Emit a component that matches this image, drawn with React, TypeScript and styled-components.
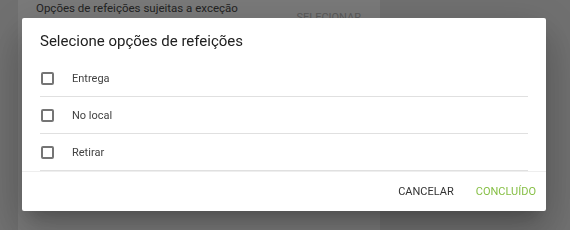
import React, { useState } from "react";
import styled, { createGlobalStyle } from "styled-components";

const GlobalStyle = createGlobalStyle`
  html, body {
    margin: 0;
    padding: 0;
    background: #ebebeb;
    font-family: Roboto, "Liberation Sans", Arial, sans-serif;
    overflow: hidden;
  }
  * {
    box-sizing: border-box;
  }
`;

const Page = styled.div`
  width: 570px;
  height: 230px;
  padding-left: 18px;
`;

const SettingsCard = styled.div`
  width: 362px;
  height: 230px;
  background: #ffffff;
  padding: 0 18px;
`;

const SettingsRow = styled.div`
  position: relative;
  height: 40px;
`;

const SettingsLabel = styled.p`
  margin: 0;
  padding-top: 1px;
  font-size: 11.5px;
  color: #4a4a4a;
`;

const SettingsAction = styled.span`
  position: absolute;
  right: 1px;
  top: 11px;
  font-size: 11px;
  color: #bdbdbd;
`;

const Backdrop = styled.div`
  position: fixed;
  inset: 0;
  background: rgba(0, 0, 0, 0.52);
`;

const Dialog = styled.div`
  position: fixed;
  left: 22px;
  top: 18px;
  width: 524px;
  height: 193px;
  background: #ffffff;
  border-radius: 2px;
  box-shadow: 0 11px 15px -7px rgba(0, 0, 0, 0.2),
    0 24px 38px 3px rgba(0, 0, 0, 0.14), 0 9px 46px 8px rgba(0, 0, 0, 0.12);
  display: flex;
  flex-direction: column;
`;

const DialogTitle = styled.h2`
  margin: 0;
  height: 42px;
  padding: 14px 18px 0;
  font-size: 15px;
  font-weight: 400;
  color: #212121;
`;

const OptionList = styled.div`
  border-bottom: 1px solid #eeeeee;
`;

const OptionRow = styled.label`
  display: flex;
  align-items: center;
  gap: 18px;
  height: 37px;
  margin: 0 18px;
  padding-left: 1px;
  border-bottom: 1px solid #e0e0e0;
  cursor: pointer;
`;

const CheckBox = styled.span<{ $checked: boolean }>`
  width: 13px;
  height: 13px;
  border: 2px solid ${({ $checked }) => ($checked ? "#8bc34a" : "#757575")};
  background: ${({ $checked }) => ($checked ? "#8bc34a" : "transparent")};
  border-radius: 2px;
  flex-shrink: 0;
`;

const OptionLabel = styled.span`
  font-size: 11px;
  color: #424242;
`;

const Footer = styled.div`
  flex: 1;
  display: flex;
  justify-content: flex-end;
  align-items: center;
  gap: 0;
  padding: 0 10px 1px 0;
`;

const FooterButton = styled.button<{ $primary?: boolean }>`
  border: none;
  background: none;
  padding: 0 11px;
  height: 30px;
  font-family: inherit;
  font-size: 11px;
  font-weight: 400;
  text-transform: uppercase;
  color: ${({ $primary }) => ($primary ? "#86bf45" : "#333333")};
  cursor: pointer;

  &:last-child {
    padding-right: 0;
  }
`;

const options = ["Entrega", "No local", "Retirar"];

export default function App() {
  const [checked, setChecked] = useState<string[]>([]);

  const toggle = (option: string) => {
    setChecked((prev) =>
      prev.includes(option)
        ? prev.filter((item) => item !== option)
        : [...prev, option]
    );
  };

  return (
    <>
      <GlobalStyle />
      <Page>
        <SettingsCard>
          <SettingsRow>
            <SettingsLabel>Opções de refeições sujeitas a exceção</SettingsLabel>
            <SettingsAction>SELECIONAR</SettingsAction>
          </SettingsRow>
        </SettingsCard>
      </Page>

      <Backdrop />

      <Dialog>
        <DialogTitle>Selecione opções de refeições</DialogTitle>

        <OptionList>
          {options.map((option) => (
            <OptionRow key={option} onClick={() => toggle(option)}>
              <CheckBox $checked={checked.includes(option)} />
              <OptionLabel>{option}</OptionLabel>
            </OptionRow>
          ))}
        </OptionList>

        <Footer>
          <FooterButton>Cancelar</FooterButton>
          <FooterButton $primary>Concluído</FooterButton>
        </Footer>
      </Dialog>
    </>
  );
}
